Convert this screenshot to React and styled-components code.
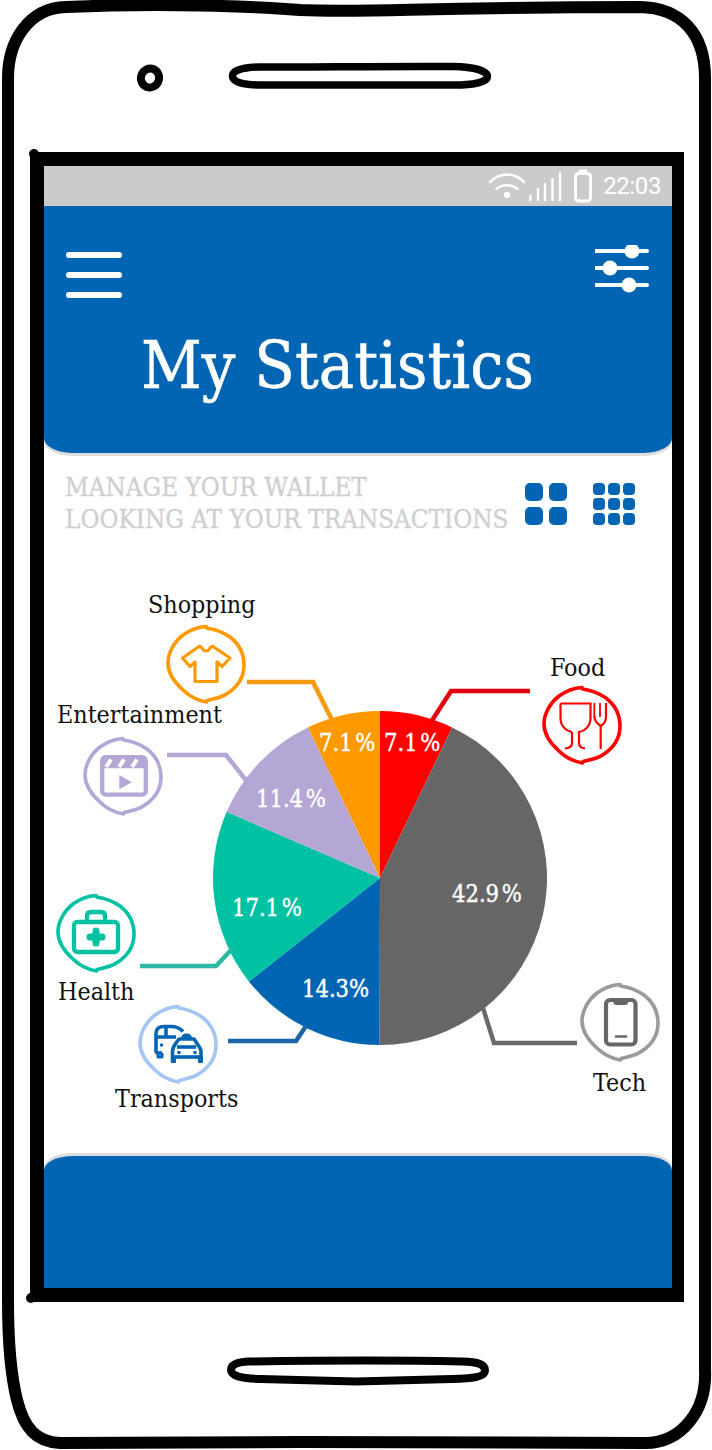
import React from "react";
import styled, { createGlobalStyle } from "styled-components";

const BLUE = "#0165b3";
const SLAB = `"DejaVu Serif Condensed", "DejaVu Serif", serif`;

const GlobalStyle = createGlobalStyle`
  html, body { margin: 0; padding: 0; background: #fff; }
  body { font-family: ${SLAB}; }
`;

// shares in reading order round the pie, starting at twelve o'clock
const slices = [
  { share: 7.1, color: "#ff0000" },
  { share: 42.9, color: "#666666" },
  { share: 14.3, color: BLUE },
  { share: 17.1, color: "#00c2a2" },
  { share: 11.4, color: "#b4a7d6" },
  { share: 7.1, color: "#ff9900" },
];

const percents = [
  { text: "7.1 %", x: 384, y: 743 },
  { text: "42.9 %", x: 452, y: 894 },
  { text: "14.3%", x: 302, y: 989 },
  { text: "17.1 %", x: 232, y: 908 },
  { text: "11.4 %", x: 256, y: 799 },
  { text: "7.1 %", x: 319, y: 743 },
];

const names = [
  { text: "Shopping", x: 148, y: 605 },
  { text: "Food", x: 550, y: 668 },
  { text: "Entertainment", x: 57, y: 715 },
  { text: "Health", x: 58, y: 992 },
  { text: "Transports", x: 115, y: 1099 },
  { text: "Tech", x: 593, y: 1083 },
];

const leaders = [
  { d: "M247 682H313L333 722", color: "#f59a0c" },
  { d: "M530 691H451L431 722", color: "#e0000f" },
  { d: "M167 755H226L249 784", color: "#b4a7d6" },
  { d: "M140 966H216L232 949", color: "#2fb9a2" },
  { d: "M228 1041H296L306 1026", color: "#1c64a5" },
  { d: "M483 1008L494 1043H577", color: "#6a6a6a" },
];

const CX = 380;
const CY = 878;
const R = 167;

const slicePaths = () => {
  const total = slices.reduce((sum, s) => sum + s.share, 0);
  let from = 0;
  return slices.map((s) => {
    const to = from + (s.share / total) * Math.PI * 2;
    const x1 = CX + R * Math.sin(from);
    const y1 = CY - R * Math.cos(from);
    const x2 = CX + R * Math.sin(to);
    const y2 = CY - R * Math.cos(to);
    const large = to - from > Math.PI ? 1 : 0;
    from = to;
    return { color: s.color, d: `M${CX} ${CY}L${x1} ${y1}A${R} ${R} 0 ${large} 1 ${x2} ${y2}Z` };
  });
};

// hand drawn ring round every category icon, same stroke with a small step top and bottom
const RING = "M40 2.500L40.500 4C48 5 56 7.500 64 13C73 20 78 30 78 41C78 54 71 63 62 69C55 74 48 75 41 76.500L40.500 78C32 76.500 24 73 17 66C8 58 2 50 2 39C2 28 9 17 17 11C24 6 32 3 40 2.500Z";

const Ring = ({ color }) => <path d={RING} fill="none" stroke={color} strokeWidth="3.600" strokeLinejoin="round" />;

const ShirtIcon = () => (
  <path
    d="M16.500 34L33 22.500C35 22 36 24 37 25.500C38 27.500 42 27.500 43 25.500C44 24 45 22 47 22.500L64 34L56 42.500L51 38V57.500H29V38L24 42.500Z"
    fill="none"
    stroke="#ff9900"
    strokeWidth="3.200"
    strokeLinejoin="round"
  />
);

const ClapperIcon = () => (
  <g>
    <rect x="19.200" y="21.200" width="43.600" height="37.400" rx="3.500" fill="none" stroke="#b4a7d6" strokeWidth="4.300" />
    <rect x="19.200" y="21.200" width="43.600" height="11" fill="#b4a7d6" />
    <path d="M23 31L28 23.500M36 31L41 23.500M49 31L54 23.500" stroke="#fff" strokeWidth="4" />
    <path d="M36.300 39L48.700 46.200L36.300 53.300Z" fill="#b4a7d6" />
  </g>
);

const KitIcon = () => (
  <g fill="none" stroke="#00c2a2">
    <rect x="18" y="29" width="44" height="30" rx="3.500" strokeWidth="4.300" />
    <path d="M31 29V23C31 20 33 19 35 19H45C47 19 49 20 49 23V29" strokeWidth="4.300" />
    <path d="M40 38V50M34 44H46" strokeWidth="7" strokeLinecap="round" />
  </g>
);

const TransportIcon = () => (
  <g fill="none" stroke={BLUE} strokeWidth="3.600" strokeLinejoin="round">
    <path d="M24 49H20C18.500 49 18 48 18 46.500V29C18 25 21 22.500 26 22.500H33C39 22.500 42 24 45 27.500" />
    <path d="M18 33H38M28 23V33" />
    <path d="M20 49V53H24V49" strokeWidth="3" />
    <circle cx="23.500" cy="41" r="1.800" fill={BLUE} stroke="none" />
    <path d="M34.500 58V47.500C34.500 44 36 42 38 39L41 35H56L60 41C62 44 63 45 63 48V58" />
    <path d="M34.500 53H63" />
    <path d="M44.500 35C44.500 32 46 31 48.500 31C51 31 52.500 32 52.500 35" strokeWidth="3" fill={BLUE} />
    <path d="M39 43H58" />
    <rect x="33" y="52" width="5" height="7" rx="1" fill={BLUE} stroke="none" />
    <rect x="60" y="52" width="5" height="7" rx="1" fill={BLUE} stroke="none" />
    <circle cx="41" cy="48.500" r="1.800" fill={BLUE} stroke="none" />
    <circle cx="57" cy="48.500" r="1.800" fill={BLUE} stroke="none" />
  </g>
);

const PhoneIcon = () => (
  <g>
    <rect x="26" y="18" width="29.500" height="44.500" rx="4" fill="none" stroke="#666666" strokeWidth="4.200" />
    <path d="M33.500 18H48V20.500C48 22 47 23 45.500 23H36C34.500 23 33.500 22 33.500 20.500Z" fill="#666666" />
    <path d="M36 54.500H46" stroke="#666666" strokeWidth="2.500" strokeLinecap="round" />
  </g>
);

const FoodIcon = () => (
  <g fill="none" stroke="#ff0000" strokeWidth="2.200">
    <path d="M18.500 18.500H48.500V33C48.500 41 43 46 37 47V58C37 61 39 63 43 63.500M30 47V58C30 61 28 63 23 63.500M30 47C24 46 18.500 41 18.500 33V18.500" />
    <path d="M52.300 18V32M58 18V32" strokeWidth="1.800" />
    <path d="M52.300 31C52.300 36 55 38.500 58.700 41V64M64 18V32C64 36 62 39 58.700 41" />
  </g>
);

const categories = [
  { x: 166, y: 624, ring: "#ff9900", Icon: ShirtIcon },
  { x: 542, y: 685, ring: "#ff0000", Icon: FoodIcon },
  { x: 83, y: 736, ring: "#b4a7d6", Icon: ClapperIcon },
  { x: 56, y: 893, ring: "#00c2a2", Icon: KitIcon },
  { x: 138, y: 1004, ring: "#a4c6f4", Icon: TransportIcon },
  { x: 580, y: 982, ring: "#9a9a9a", Icon: PhoneIcon },
];

const App = () => (
  <>
    <GlobalStyle />
    <Phone>
      <Outline viewBox="0 0 712 1450" aria-hidden="true">
        <path
          d="M66 7C160 3 250 6 300 10C370 13 420 7 640 7C680 8 705 32 705 78V1370C707 1410 682 1443 645 1443L300 1442L60 1443C36 1442 24 1428 17 1400C10 1372 8 1340 8 1300V78C8 42 28 8 66 7Z"
          fill="none"
          stroke="#000"
          strokeWidth="12"
        />
        <circle cx="34" cy="154" r="5" fill="#000" />
        <circle cx="31" cy="1298" r="5" fill="#000" />
      </Outline>
      <TopBezel>
        <Camera width="28" height="28" viewBox="0 0 28 28" aria-hidden="true">
          <ellipse cx="14" cy="14" rx="9" ry="9.500" fill="none" stroke="#000" strokeWidth="8" transform="rotate(20 14 14)" />
        </Camera>
        <svg width="264" height="28" viewBox="0 0 264 28" aria-hidden="true">
          <path
            d="M32 5C90 5 180 4 226 4.500C248 5 260.500 9 260.500 14.500C260.500 20 246 23 226 23H34C16 23 5.500 20 5.500 14C5.500 9 14 5.500 32 5Z"
            fill="none"
            stroke="#000"
            strokeWidth="7.500"
          />
        </svg>
      </TopBezel>

      <Screen>
        <StatusBar>
          <svg width="106" height="36" viewBox="488 168 106 36" aria-hidden="true">
            <g fill="none" stroke="#fff" strokeLinecap="round">
              <path d="M491 182C501 172 515 172 525 182" strokeWidth="2.500" />
              <path d="M497.500 189C503 184 513 184 518.500 189" strokeWidth="2.500" />
              <path d="M531.500 200V196M539 200V189M546 200V184M553.500 200V179M561 200V173" strokeWidth="2.400" />
              <rect x="576.500" y="173.500" width="15" height="27.500" rx="3" strokeWidth="3" />
              <path d="M581 171H587" strokeWidth="3" />
            </g>
            <circle cx="508" cy="195" r="3.200" fill="#fff" />
          </svg>
          <Clock>22:03</Clock>
        </StatusBar>

        <Header>
          <HeaderRow>
            <MenuButton>
              <MenuBar />
              <MenuBar />
              <MenuBar />
            </MenuButton>
            <svg width="54" height="48" viewBox="596 245 54 48" aria-hidden="true">
              <path d="M597 251H648M597 268H648M597 285H648" stroke="#fff" strokeWidth="4" strokeLinecap="round" />
              <circle cx="633" cy="251" r="7.500" fill="#fff" />
              <circle cx="611" cy="268" r="7.500" fill="#fff" />
              <circle cx="630" cy="285" r="7.500" fill="#fff" />
            </svg>
          </HeaderRow>
          <Title>My Statistics</Title>
        </Header>

        <Intro>
          <IntroText>
            MANAGE YOUR WALLET
            <br />
            LOOKING AT YOUR TRANSACTIONS
          </IntroText>
          <ViewToggles>
            <ViewGrid $columns={2} $cell={18} $gap={6} $round={5}>
              {Array.from({ length: 4 }, (_, i) => (
                <span key={i} />
              ))}
            </ViewGrid>
            <ViewGrid $columns={3} $cell={12} $gap={3} $round={4}>
              {Array.from({ length: 9 }, (_, i) => (
                <span key={i} />
              ))}
            </ViewGrid>
          </ViewToggles>
        </Intro>

        <Chart>
          <ChartDrawing viewBox="44 550 628 606" aria-hidden="true">
            {slicePaths().map((s) => (
              <path key={s.color} d={s.d} fill={s.color} />
            ))}
            {leaders.map((l) => (
              <path key={l.d} d={l.d} fill="none" stroke={l.color} strokeWidth="4.500" />
            ))}
            {categories.map(({ x, y, ring, Icon }) => (
              <g key={ring} transform={`translate(${x} ${y})`}>
                <Ring color={ring} />
                <Icon />
              </g>
            ))}
          </ChartDrawing>
          {percents.map((p) => (
            <Percent key={p.x} $x={p.x} $y={p.y}>
              {p.text}
            </Percent>
          ))}
          {names.map((n) => (
            <CategoryName key={n.text} $x={n.x} $y={n.y}>
              {n.text}
            </CategoryName>
          ))}
        </Chart>

        <Footer />
      </Screen>

      <BottomBezel>
        <svg width="264" height="32" viewBox="0 0 264 32" aria-hidden="true">
          <path
            d="M22 5.500C90 4.500 190 4.500 236 5.500C252 6 259 8 259 14.500C259 21 246 22.500 226 23L130 25.500L34 23C16 22.500 5 20 5 14C5 8 12 6 22 5.500Z"
            fill="none"
            stroke="#000"
            strokeWidth="8"
          />
        </svg>
      </BottomBezel>
    </Phone>
  </>
);

export default App;

const Phone = styled.div`
  position: relative;
  width: 712px;
  height: 1450px;
  overflow: hidden;
  background: #fff;
`;

const Outline = styled.svg`
  position: absolute;
  inset: 0;
  width: 712px;
  height: 1450px;
`;

const TopBezel = styled.div`
  position: relative;
  height: 152px;
  display: flex;
  align-items: center;
  gap: 63px;
  padding-left: 136px;
  box-sizing: border-box;
`;

const Camera = styled.svg`
  margin-top: 4px;
`;

const BottomBezel = styled.div`
  position: relative;
  padding: 54px 0 0 226px;
  svg {
    display: block;
  }
`;

const Screen = styled.div`
  position: relative;
  box-sizing: border-box;
  width: 654px;
  height: 1150px;
  margin-left: 30px;
  border: solid #000;
  border-width: 14px 12px 14px 14px;
  display: flex;
  flex-direction: column;
  background: #fff;
`;

const StatusBar = styled.div`
  height: 40px;
  flex: none;
  background: #cbcbcb;
  display: flex;
  align-items: center;
  justify-content: flex-end;
  gap: 10px;
  padding-right: 11px;
`;

const Clock = styled.span`
  font-family: Roboto, sans-serif;
  font-size: 24px;
  letter-spacing: -0.4px;
  color: #fff;
`;

const Header = styled.header`
  height: 247px;
  flex: none;
  box-sizing: border-box;
  padding: 39px 23px 0 22px;
  background: ${BLUE};
  border-radius: 0 0 28px 28px / 0 0 15px 15px;
  box-shadow: 0 3px 0 #dddddd;
`;

const HeaderRow = styled.div`
  display: flex;
  justify-content: space-between;
  align-items: flex-start;
`;

const MenuButton = styled.div`
  display: flex;
  flex-direction: column;
  gap: 14px;
  margin-top: 7px;
`;

const MenuBar = styled.span`
  display: block;
  width: 56px;
  height: 6px;
  border-radius: 3px;
  background: #fff;
`;

const Title = styled.h1`
  margin: 33px 40px 0 0;
  font-family: ${SLAB};
  font-weight: 400;
  font-size: 66px;
  line-height: 70px;
  text-align: center;
  color: #fff;
  -webkit-text-stroke: 0.5px #fff;
`;

const Intro = styled.section`
  flex: none;
  height: 97px;
  box-sizing: border-box;
  padding: 18px 37px 0 21px;
  display: flex;
  justify-content: space-between;
  align-items: flex-start;
`;

const IntroText = styled.p`
  margin: 0;
  font-size: 25.800px;
  line-height: 32px;
  color: #cfcfcf;
  white-space: nowrap;
  -webkit-text-stroke: 0.3px #cfcfcf;
`;

const ViewToggles = styled.div`
  display: flex;
  gap: 26px;
  margin-top: 12px;
`;

const ViewGrid = styled.div`
  display: grid;
  grid-template-columns: repeat(${(p) => p.$columns}, ${(p) => p.$cell}px);
  grid-auto-rows: ${(p) => p.$cell}px;
  gap: ${(p) => p.$gap}px;
  span {
    background: ${BLUE};
    border-radius: ${(p) => p.$round}px;
  }
`;

const Chart = styled.div`
  position: relative;
  flex: 1;
`;

const ChartDrawing = styled.svg`
  display: block;
  width: 628px;
  height: 606px;
`;

// x and y come in page coordinates, the chart's corner sits at 44,550
const Percent = styled.span`
  position: absolute;
  left: ${(p) => p.$x - 44}px;
  top: ${(p) => p.$y - 550 - 15}px;
  font-size: 23.500px;
  line-height: 30px;
  word-spacing: -4px;
  color: #fff;
  white-space: nowrap;
  -webkit-text-stroke: 0.4px #fff;
`;

const CategoryName = styled.span`
  position: absolute;
  left: ${(p) => p.$x - 44}px;
  top: ${(p) => p.$y - 550 - 15}px;
  font-size: 24.800px;
  line-height: 30px;
  color: #111;
  white-space: nowrap;
`;

const Footer = styled.footer`
  height: 132px;
  flex: none;
  background: ${BLUE};
  border-radius: 30px 30px 0 0 / 14px 14px 0 0;
  box-shadow: 0 -3px 0 #dddddd;
`;
